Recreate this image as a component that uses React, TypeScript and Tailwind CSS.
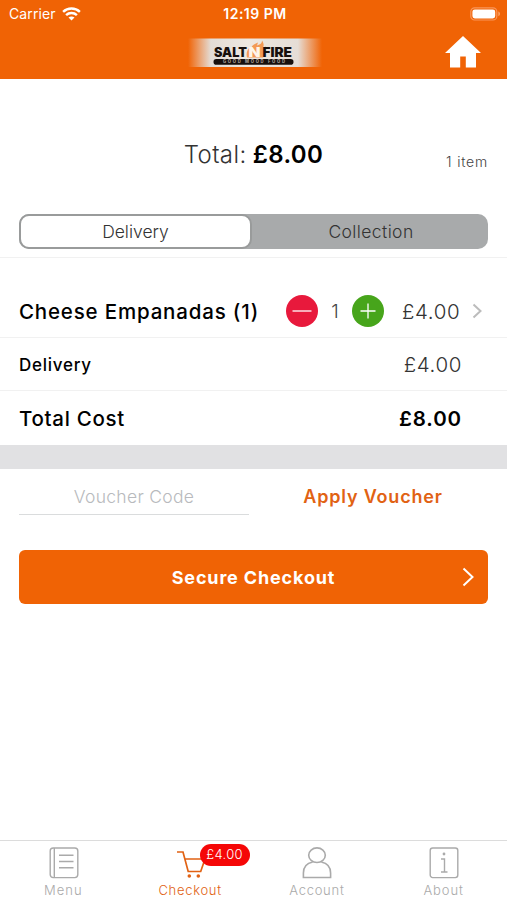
import type { ReactNode } from 'react';

function StatusBar() {
  return (
    <div className="flex h-7 items-center justify-between pr-[6px] pb-px pl-[9px] text-white">
      <div className="flex w-[180px] items-center gap-[6px]">
        <span className="text-[14px] tracking-[0.1px]">Carrier</span>
        <svg width="19" height="14" viewBox="0 0 19 14" fill="none" stroke="currentColor" strokeWidth="2.5">
          <path d="M1.1 4.8C5.8.5 13.2.5 17.9 4.8" />
          <path d="M4.1 8.1c3-2.8 7.8-2.8 10.8 0" />
          <path d="M9.5 13.5 6.5 10.6c1.7-1.5 4.3-1.5 6 0Z" fill="currentColor" stroke="none" />
        </svg>
      </div>
      <span className="text-[14px] font-semibold tracking-[0.5px]">12:19 PM</span>
      <div className="flex w-[180px] justify-end">
        <svg width="31" height="14" viewBox="0 0 31 14" fill="none">
          <rect x="0.8" y="0.8" width="26" height="12.2" rx="3.8" stroke="#f9965a" strokeWidth="1.2" />
          <rect x="2.4" y="2.4" width="22.8" height="9" rx="2.4" fill="white" />
          <path d="M28.4 4.6c2 .7 2 4 0 4.7Z" fill="#fba873" />
        </svg>
      </div>
    </div>
  );
}

function Logo() {
  return (
    <svg width="134" height="32" viewBox="0 0 134 32">
      <defs>
        <linearGradient id="plate">
          <stop offset="0" stopColor="#e8dfd8" stopOpacity="0" />
          <stop offset="0.17" stopColor="#e3dcd5" />
          <stop offset="0.45" stopColor="#eee8e0" />
          <stop offset="0.82" stopColor="#e5ddd6" />
          <stop offset="1" stopColor="#e8dfd8" stopOpacity="0" />
        </linearGradient>
      </defs>
      <rect y="1.5" width="134" height="28.5" fill="url(#plate)" />
      <path d="M59 20.5c-1-4 0-8 3-10l1 2c0-4 3-5 7-7l-1 3c4-1 5-3 5-5 2 3 2 5 1 7l3-1c-1 2-1 3 0 5l-3 6Z" fill="#f39a55" />
      <g fontFamily="Inter, sans-serif" fontWeight="900" fontSize="13">
        <text x="26" y="20.2" textLength="33" lengthAdjust="spacingAndGlyphs" fill="#17100d">SALT</text>
        <text x="60.5" y="20.2" textLength="12" lengthAdjust="spacingAndGlyphs" fill="#fff6e9">N</text>
        <text x="74.5" y="20.2" textLength="29.5" lengthAdjust="spacingAndGlyphs" fill="#17100d">FIRE</text>
      </g>
      <rect x="25.5" y="22" width="80" height="5.7" rx="2.8" fill="#17100d" />
      <text x="35" y="26.4" textLength="62" fontFamily="Inter, sans-serif" fontWeight="800" fontSize="4.2" fill="#a89c94">GOOD MOOD FOOD</text>
    </svg>
  );
}

function NavBar() {
  return (
    <div className="grid h-[51px] grid-cols-[1fr_134px_1fr] items-center pt-px">
      <div />
      <div className="-mt-[3px] pl-px"><Logo /></div>
      <svg className="-mt-1 mr-[26px] justify-self-end" width="36" height="32" viewBox="0 0 36 32" fill="white">
        <path d="M18 0 36 17h-5v14.5H20.8v-11h-5.6v11H5V17H0Z" />
      </svg>
    </div>
  );
}

function Circle({ className, children }: { className: string; children: ReactNode }) {
  return (
    <div className={`flex size-8 items-center justify-center rounded-full ${className}`}>
      <svg width="20" height="20" viewBox="0 0 20 20" stroke="white" strokeWidth="1.3">{children}</svg>
    </div>
  );
}

function Tab({ label, className, textClass, children }: { label: string; className: string; textClass: string; children: ReactNode }) {
  return (
    <div className={`flex flex-1 flex-col items-center pt-[5px] ${className}`}>
      <div className="relative h-[34px] pl-px">{children}</div>
      <span className={`mt-px text-[13px] leading-[18px] font-light ${textClass}`}>{label}</span>
    </div>
  );
}

export default function App() {
  return (
    <div className="flex h-[900px] w-[507px] flex-col overflow-hidden bg-white font-['Inter',sans-serif] text-black">
      <header className="h-[79px] bg-[#f06305]">
        <StatusBar />
        <NavBar />
      </header>

      <section className="flex h-[179px] flex-col border-b border-[#f1f1f1] px-[19px] pt-[58px]">
        <div className="grid h-[30px] grid-cols-[1fr_auto_1fr] items-center">
          <div />
          <div className="flex gap-[6px] text-[24px]">
            <span className="font-light tracking-[0.4px] text-[#333]">Total:</span>
            <span className="font-semibold tracking-[0.4px]">£8.00</span>
          </div>
          <span className="mt-3 justify-self-end text-[14px] font-light tracking-[0.8px] text-[#444]">1 item</span>
        </div>
        <div className="mt-[46.5px] flex h-[35.5px] rounded-[10px] bg-[#a8aaab] text-[17.5px] font-light text-[#333]">
          <div className="flex w-[233px] items-center justify-center rounded-[10px] border-[2.5px] border-[#999b9b] bg-white pt-px">
            <span>Delivery</span>
          </div>
          <div className="flex flex-1 items-center justify-center pt-px pl-[2px]">
            <span className="tracking-[0.4px]">Collection</span>
          </div>
        </div>
      </section>

      <div className="flex h-[80px] items-center border-b border-[#f1f1f1] pt-[27px] pl-[19px]">
        <span className="w-[267px] pt-[3px] text-[20.5px] font-medium tracking-[0.82px]">Cheese Empanadas (1)</span>
        <Circle className="bg-[#e8193c]"><path d="M0.5 10h19" /></Circle>
        <span className="w-[34px] pt-[2px] text-center text-[19px] font-light text-[#444]">1</span>
        <Circle className="bg-[#47a51b]"><path d="M2.5 10h15M10 2.5v15" /></Circle>
        <span className="ml-[18px] w-[58px] pt-[2px] text-[20.5px] font-light tracking-[0.6px] text-[#333]">£4.00</span>
        <svg className="ml-3" width="12" height="16" viewBox="0 0 12 16" fill="none" stroke="#bcbcbc" strokeWidth="2">
          <path d="m1.5 1.5 7 6.5-7 6.5" />
        </svg>
      </div>
      <div className="flex h-[53px] items-center justify-between border-b border-[#f1f1f1] pt-[2px] pr-[45px] pl-[19px]">
        <span className="pt-[2px] text-[17px] font-medium tracking-[0.75px]">Delivery</span>
        <span className="text-[20.5px] font-light tracking-[0.6px] text-[#333]">£4.00</span>
      </div>
      <div className="flex h-[54px] items-center justify-between pt-[2px] pr-[45px] pl-[19px] text-[20.5px]">
        <span className="font-medium tracking-[0.7px]">Total Cost</span>
        <span className="font-semibold tracking-[0.9px]">£8.00</span>
      </div>
      <div className="h-6 bg-[#e1e1e3]" />

      <div className="flex px-[19px]">
        <div className="flex h-[46px] w-[230px] items-center justify-center border-b-[1.5px] border-[#dadcdd] pt-[11px]">
          <span className="text-[17.5px] font-light tracking-[0.3px] text-[#b8babd]">Voucher Code</span>
        </div>
        <div className="ml-[9px] flex h-[46px] flex-1 items-center justify-center pt-[9px]">
          <span className="text-[18px] font-semibold tracking-[0.8px] text-[#e16213]">Apply Voucher</span>
        </div>
      </div>

      <button className="mx-[19px] mt-[35px] grid h-[54px] shrink-0 grid-cols-[1fr_auto_1fr] items-center rounded-[6px] bg-[#f06305] text-white">
        <span />
        <span className="pt-px text-[18px] font-bold tracking-[0.85px]">Secure Checkout</span>
        <svg className="mr-[13px] justify-self-end" width="13" height="20" viewBox="0 0 13 20" fill="none" stroke="currentColor" strokeWidth="2">
          <path d="m1.5 1.5 9 8.5-9 8.5" />
        </svg>
      </button>

      <nav className="mt-auto flex h-[60px] border-t border-[#dcdcdc]">
        <Tab label="Menu" className="text-[#aaa]" textClass="tracking-[1px]">
          <svg width="30" height="33" viewBox="0 0 30 33" fill="none" stroke="currentColor" strokeWidth="1.4">
            <rect x="1.2" y="2" width="27.6" height="29.6" rx="3" />
            <path d="M5.3 2v29.6M10 9.2h14.5M10 15.5h14.5M10 21.8h14.5" />
          </svg>
        </Tab>
        <Tab label="Checkout" className="text-[#e16213]" textClass="tracking-[0.7px]">
          <svg width="30" height="33" viewBox="0 0 30 33" fill="none" stroke="currentColor" strokeWidth="1.7">
            <path d="M1 6h6l5.2 19.5h12.5L29 13H9" />
            <circle cx="13.3" cy="30" r="1.8" fill="currentColor" stroke="none" />
            <circle cx="22.3" cy="30" r="1.8" fill="currentColor" stroke="none" />
          </svg>
          <div className="absolute -top-[2px] left-[25px] flex h-[22px] w-[50px] items-center justify-center rounded-full bg-[#f50707] text-[13px] font-light tracking-[0.3px] text-white">£4.00</div>
        </Tab>
        <Tab label="Account" className="text-[#aaa]" textClass="tracking-[0.75px]">
          <svg width="30" height="33" viewBox="0 0 30 33" fill="none" stroke="currentColor" strokeWidth="1.6">
            <ellipse cx="15" cy="9.2" rx="8.3" ry="7.3" />
            <path d="M10.7 16C4.8 17.2 1.4 21.5 1.4 27v4.5h27.2V27c0-5.5-3.4-9.8-9.3-11" />
          </svg>
        </Tab>
        <Tab label="About" className="text-[#aaa]" textClass="tracking-[0.9px]">
          <svg width="30" height="33" viewBox="0 0 30 33" fill="none" stroke="currentColor" strokeWidth="1.4">
            <rect x="1.2" y="2" width="27.6" height="29.6" rx="2.5" />
            <path d="M12 13h3.5v13M12 26h6.5" />
            <circle cx="15" cy="8" r="1.4" fill="currentColor" stroke="none" />
          </svg>
        </Tab>
      </nav>
    </div>
  );
}
